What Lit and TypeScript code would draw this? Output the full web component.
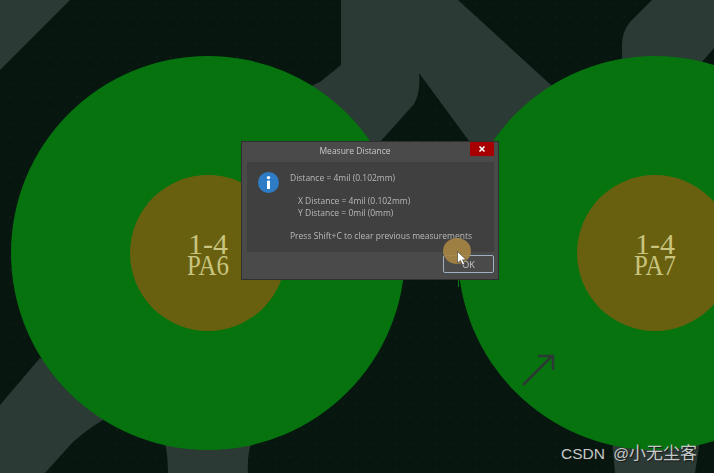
import { LitElement, html, css, svg } from "lit";
import { customElement } from "lit/decorators.js";

const pad = (cx: number, a: string, b: string) => svg`
  <circle cx=${cx} cy="253" r="197" fill="#06730f"/>
  <circle cx=${cx} cy="253" r="78" fill="#68600f"/>
  <text class="pad" x=${cx - 20} y="254" textLength="40" lengthAdjust="spacingAndGlyphs">${a}</text>
  <text class="pad" x=${cx - 21} y="275" textLength="42" lengthAdjust="spacingAndGlyphs">${b}</text>
`;

@customElement("app-root")
export class AppRoot extends LitElement {
  static styles = css`
    :host {
      display: block;
      position: relative;
      width: 714px;
      height: 473px;
      overflow: hidden;
      background: #07160f;
      font-family: "Open Sans", "Noto Sans", sans-serif;
    }
    .board {
      display: block;
      width: 714px;
      height: 473px;
    }
    .pad {
      font-family: "Liberation Serif", serif;
      font-size: 29px;
      fill: #c9c47e;
    }
    .dialog {
      position: absolute;
      left: 241px;
      top: 141px;
      width: 258px;
      height: 139px;
      box-sizing: border-box;
      background: #4a4a4a;
      border: 1px solid #303030;
      display: flex;
      flex-direction: column;
      color: #b8b8b8;
      font-size: 8.5px;
      line-height: 12px;
      filter: blur(0.35px);
    }
    .titlebar {
      height: 20px;
      flex: none;
      display: flex;
      align-items: flex-start;
      justify-content: center;
      position: relative;
      padding: 3px 30px 0 0;
      box-sizing: border-box;
      color: #c8c8c8;
    }
    .close {
      position: absolute;
      right: 4px;
      top: 0;
      width: 24px;
      height: 14px;
      background: #a80000;
      display: flex;
      align-items: center;
      justify-content: center;
    }
    .panel {
      flex: none;
      height: 90px;
      margin: 0 4px 0 5px;
      background: #404040;
      display: flex;
      gap: 11px;
      padding: 10px 0 0 11px;
      box-sizing: border-box;
    }
    .info {
      flex: none;
      width: 21px;
      height: 21px;
      display: block;
    }
    .lines {
      display: flex;
      flex-direction: column;
      gap: 11px;
      white-space: nowrap;
    }
    .sub {
      padding-left: 8px;
    }
    .footer {
      flex: 1;
      display: flex;
      justify-content: flex-end;
      align-items: flex-start;
      padding: 3px 4px 0 0;
    }
    .ok {
      width: 51px;
      height: 18px;
      box-sizing: border-box;
      border: 1px solid #9fb0c0;
      border-radius: 2px;
      background: #4a4a4a;
      color: #c8c8c8;
      text-align: center;
      font-size: 9px;
      line-height: 18px;
    }
    .spot {
      position: absolute;
      left: 443px;
      top: 238px;
      width: 28px;
      height: 26px;
      border-radius: 50%;
      background: #a58443;
      opacity: 0.92;
    }
    .cursor {
      position: absolute;
      left: 457px;
      top: 251px;
      width: 10px;
      height: 15px;
    }
    .mark {
      position: absolute;
      left: 561px;
      top: 444px;
      font-size: 15.5px;
      word-spacing: 4px;
      line-height: 20px;
      white-space: nowrap;
      color: #c4c8c6;
      font-family: "Liberation Sans", "Noto Sans CJK SC", sans-serif;
      text-shadow: 1px 1px 1px #1a1a1a;
    }
    .mark .cjk {
      font-size: 17px;
    }
  `;

  render() {
    return html`
      <svg class="board" viewBox="0 0 714 473">
        <defs>
          <pattern id="grid" x="0" y="3" width="13.33" height="13.33" patternUnits="userSpaceOnUse">
            <rect x="10" y="0" width="1" height="1" fill="#1d2c26"/>
          </pattern>
        </defs>
        <rect width="714" height="473" fill="#07160f"/>
        <rect width="714" height="473" fill="url(#grid)"/>
        <g fill="#2b3a35">
          <path d="M0 0H70L0 70Z"/>
          <path d="M341 0H458L552 86L520 160H483L419 73Q421 92 414 104Q398 122 380 142H300L280 100L320 82L341 65Z"/>
          <path d="M652 0H714V48L702 62H622V45Q622 32 630 22Z"/>
          <path d="M0 405L40 358L110 400Q118 410 103 420Q86 430 72 443L45 473H0Z"/>
          <path d="M160 440H256L250 447Q247 460 248 473H168Q168 460 166 447Z"/>
          <path d="M612 440H700L695 473H615Z"/>
        </g>
        ${pad(208, "1-4", "PA6")}
        ${pad(655, "1-4", "PA7")}
        <path d="M523 385L552 356M538 356H553V370" fill="none" stroke="#2b3a35" stroke-width="2.5"/>
        <rect x="458" y="280" width="1" height="7" fill="#0a7a14"/>
      </svg>
      <div class="dialog">
        <div class="titlebar">
          Measure Distance
          <div class="close">
            <svg width="8" height="8" viewBox="0 0 8 8"><path d="M1.5 1.5L6.5 6.5M6.5 1.5L1.5 6.5" stroke="#fff" stroke-width="1.6"/></svg>
          </div>
        </div>
        <div class="panel">
          <svg class="info" viewBox="0 0 21 21">
            <circle cx="10.5" cy="10.5" r="10.5" fill="#2f7cc6"/>
            <circle cx="10.5" cy="5.6" r="1.7" fill="#fff"/>
            <rect x="9" y="8.6" width="3" height="8.4" fill="#fff"/>
          </svg>
          <div class="lines">
            <div>Distance = 4mil (0.102mm)</div>
            <div class="sub">X Distance = 4mil (0.102mm)<br />Y Distance = 0mil (0mm)</div>
            <div>Press Shift+C to clear previous measurements</div>
          </div>
        </div>
        <div class="footer"><div class="ok">OK</div></div>
      </div>
      <div class="spot"></div>
      <svg class="cursor" viewBox="0 0 10 15"><path d="M0.5 0.5V12L3.4 9.4L5.6 14L7.6 13L5.6 8.8H9.2Z" fill="#fff" stroke="#333" stroke-width="0.6"/></svg>
      <div class="mark">CSDN @<span class="cjk">小无尘客</span></div>
    `;
  }
}
